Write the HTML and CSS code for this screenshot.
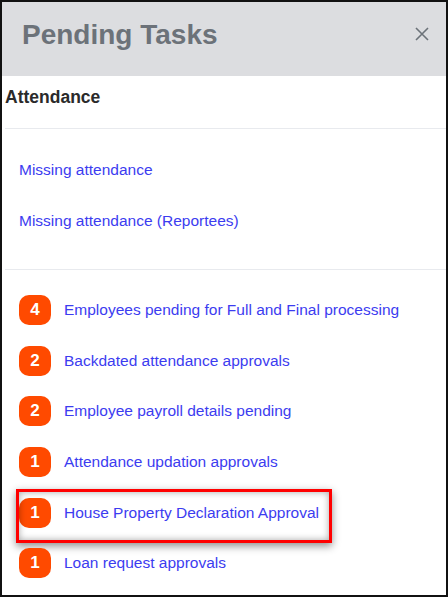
FILE: index.html
```html
<!DOCTYPE html>
<html lang="en">
<head>
    <meta charset="UTF-8">
    <meta name="viewport" content="width=device-width, initial-scale=1.0">
    <title>Pending Tasks</title>
    <link rel="stylesheet" href="styles.css">
</head>
<body>
    <div class="panel">
        <div class="panel-header">
            <h1>Pending Tasks</h1>
            <button class="close" aria-label="Close">
                <svg width="16" height="16" viewBox="0 0 16 16">
                    <path d="M2 2 L14 14 M14 2 L2 14" stroke="#6c7279" stroke-width="1.6" fill="none"/>
                </svg>
            </button>
        </div>
        <div class="panel-body">
            <h2 class="section-title">Attendance</h2>
            <ul class="link-list">
                <li><a href="#">Missing attendance</a></li>
                <li><a href="#">Missing attendance (Reportees)</a></li>
            </ul>
            <ul class="task-list">
                <li><span class="count">4</span><a href="#">Employees pending for Full and Final processing</a></li>
                <li><span class="count">2</span><a href="#">Backdated attendance approvals</a></li>
                <li><span class="count">2</span><a href="#">Employee payroll details pending</a></li>
                <li><span class="count">1</span><a href="#">Attendance updation approvals</a></li>
                <li class="marked"><span class="count">1</span><a href="#">House Property Declaration Approval</a></li>
                <li><span class="count">1</span><a href="#">Loan request approvals</a></li>
            </ul>
        </div>
    </div>
</body>
</html>
```

FILE: styles.css
```css
html, body {
    margin: 0;
    height: 100%;
}
body {
    font-family: "Liberation Sans", Arial, sans-serif;
    background-color: white;
}
.panel {
    box-sizing: border-box;
    height: 597px;
    border: 2px solid #111;
    overflow: hidden;
}
.panel-header {
    height: 74px;
    background-color: #dcdde0;
    display: flex;
    align-items: center;
    justify-content: space-between;
    padding: 0 16px 0 20px;
}
.panel-header h1 {
    margin: 0;
    font-size: 28px;
    font-weight: bold;
    color: #6c7279;
    padding-bottom: 8px;
}
.close {
    border: none;
    background: none;
    padding: 0;
    margin-bottom: 10px;
    cursor: pointer;
    display: flex;
}
.panel-body {
    padding-left: 3px;
}
.section-title {
    margin: 0;
    padding: 10px 0 20px;
    line-height: 22px;
    font-size: 17.5px;
    font-weight: bold;
    color: #2a2a2a;
    border-bottom: 1px solid #e8eaee;
}
.link-list,
.task-list {
    list-style: none;
    margin: 0;
    padding: 0 0 0 14px;
}
.link-list {
    padding-top: 15px;
    padding-bottom: 23px;
    border-bottom: 1px solid #e8eaee;
}
.link-list li {
    height: 51px;
    display: flex;
    align-items: center;
}
a {
    color: #3c3cf0;
    text-decoration: none;
    font-size: 15.5px;
}
.task-list {
    padding-top: 15px;
}
.task-list li {
    height: 50.6px;
    display: flex;
    align-items: center;
    gap: 13px;
    position: relative;
}
.count {
    width: 32px;
    height: 30px;
    border-radius: 10px;
    background-color: #ff4a00;
    color: white;
    font-size: 17px;
    font-weight: bold;
    display: flex;
    align-items: center;
    justify-content: center;
}
/* annotation box round the highlighted row */
.marked::after {
    content: "";
    position: absolute;
    left: -3px;
    top: 2px;
    width: 310px;
    height: 48px;
    border: 3px solid #f00;
    box-shadow: 0 3px 8px rgba(0, 0, 0, 0.45), inset 0 0 7px rgba(0, 0, 0, 0.35);
}
```
